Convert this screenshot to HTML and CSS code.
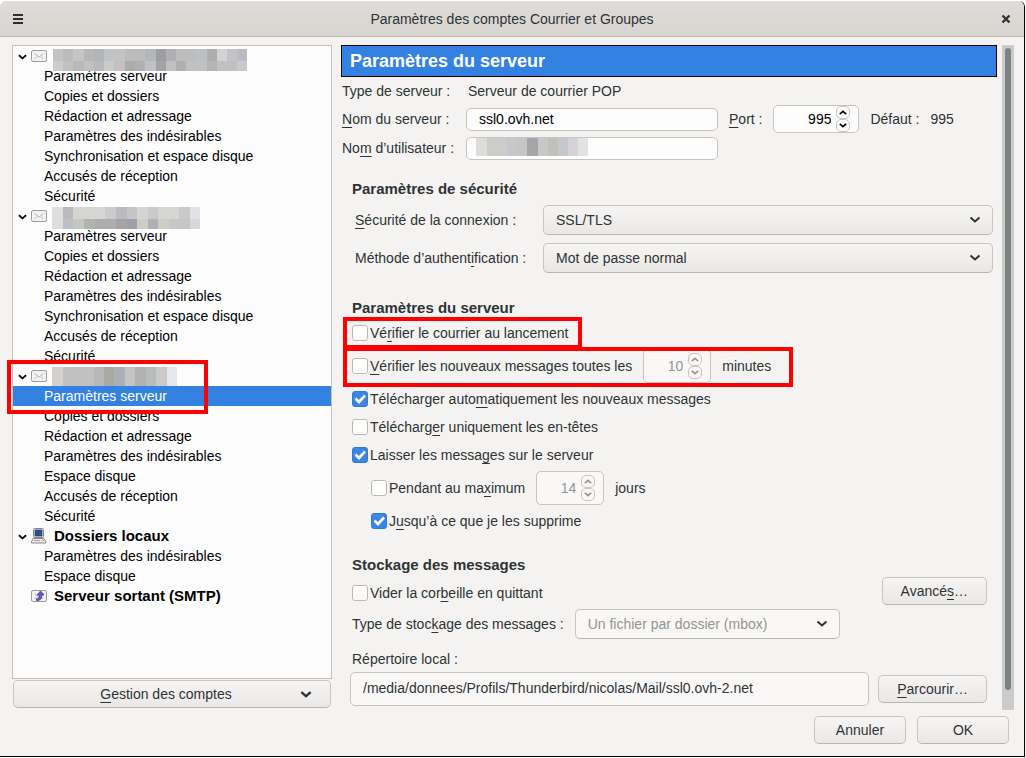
FILE: index.html
```
<!DOCTYPE html>
<html lang="fr">
<head>
    <meta charset="UTF-8">
    <meta name="viewport" content="width=device-width, initial-scale=1.0">
    <title>Paramètres des comptes Courrier et Groupes</title>
    <link rel="stylesheet" href="styles.css">
</head>
<body>
    <!-- Shared icons -->
    <svg class="sprite" aria-hidden="true">
        <symbol id="chevron" viewBox="0 0 10 6">
            <path d="M1 1l4 3.500 4-3.500" fill="none" stroke="currentColor" stroke-width="2"/>
        </symbol>
        <symbol id="mail" viewBox="0 0 16 16">
            <rect x="0.500" y="2.500" width="15" height="11" rx="1.500" fill="#f1f2f1" stroke="#9c9e9a"/>
            <path d="M3.500 5.500l4.500 3.500 4.500-3.500M3.500 11l2.500-2.500M12.500 11l-2.500-2.500" fill="none" stroke="#b0b2ae"/>
        </symbol>
    </svg>

    <div class="window">
        <header class="titlebar">
            <button class="title-button" aria-label="Menu">
                <svg width="10" height="10"><path d="M0 1h10M0 5h10M0 9h10" stroke="#2b2f35" stroke-width="2"/></svg>
            </button>
            <h1>Paramètres des comptes Courrier et Groupes</h1>
            <button class="title-button" aria-label="Fermer">
                <svg width="10" height="10"><path d="M1.500 1.500l7 7M8.500 1.500l-7 7" stroke="#2e3436" stroke-width="2.400"/></svg>
            </button>
        </header>

        <main class="content">
            <nav class="sidebar">
                <ul class="tree">
                    <li>
                        <div class="account">
                            <svg class="twisty"><use href="#chevron"/></svg>
                            <svg class="icon"><use href="#mail"/></svg>
                            <svg class="hidden-name first" width="194" height="22" viewBox="0 0 194 22" shape-rendering="crispEdges">
                                <rect width="194" height="12" fill="#c2c3c4"/>
                                <rect y="12" width="194" height="10" fill="#c1c1c2"/>
                                <rect x="10" width="10" height="12" fill="#bcbcbb"/>
                                <rect x="20" width="11" height="12" fill="#c7c4c5"/>
                                <rect x="31" width="10" height="12" fill="#b7b7b6"/>
                                <rect x="41" width="10" height="12" fill="#b2b4b7"/>
                                <rect x="72" width="20" height="12" fill="#bbbcbc"/>
                                <rect x="92" width="11" height="12" fill="#b4b7b8"/>
                                <rect x="103" width="10" height="12" fill="#9d9ea1"/>
                                <rect x="113" width="10" height="12" fill="#afb0b2"/>
                                <rect x="123" width="20" height="12" fill="#bebdbd"/>
                                <rect x="143" width="11" height="12" fill="#bbc0c4"/>
                                <rect x="154" width="10" height="12" fill="#b0aeac"/>
                                <rect x="164" width="10" height="12" fill="#d3d3d3"/>
                                <rect x="184" width="10" height="12" fill="#b9bcc1"/>
                                <rect y="12" width="10" height="10" fill="#cdcdcf"/>
                                <rect x="20" y="12" width="11" height="10" fill="#b9b9b9"/>
                                <rect x="41" y="12" width="10" height="10" fill="#b7babc"/>
                                <rect x="51" y="12" width="10" height="10" fill="#cbcaca"/>
                                <rect x="72" y="12" width="10" height="10" fill="#acacab"/>
                                <rect x="82" y="12" width="10" height="10" fill="#b1b0b0"/>
                                <rect x="103" y="12" width="10" height="10" fill="#a3a3a4"/>
                                <rect x="123" y="12" width="10" height="10" fill="#b0b0b1"/>
                                <rect x="154" y="12" width="10" height="10" fill="#b7b5b4"/>
                                <rect x="184" y="12" width="10" height="10" fill="#cacaca"/>
                            </svg>
                        </div>
                        <ul>
                            <li><a href="#">Paramètres serveur</a></li>
                            <li><a href="#">Copies et dossiers</a></li>
                            <li><a href="#">Rédaction et adressage</a></li>
                            <li><a href="#">Paramètres des indésirables</a></li>
                            <li><a href="#">Synchronisation et espace disque</a></li>
                            <li><a href="#">Accusés de réception</a></li>
                            <li><a href="#">Sécurité</a></li>
                        </ul>
                    </li>
                    <li>
                        <div class="account">
                            <svg class="twisty"><use href="#chevron"/></svg>
                            <svg class="icon"><use href="#mail"/></svg>
                            <svg class="hidden-name" width="148" height="22" viewBox="0 0 148 22" shape-rendering="crispEdges">
                                <rect width="148" height="12" fill="#d5d5d4"/>
                                <rect y="12" width="148" height="10" fill="#c6c7c5"/>
                                <rect width="11" height="12" fill="#dfdfdf"/>
                                <rect x="11" width="10" height="12" fill="#bbbbbc"/>
                                <rect x="53" width="11" height="12" fill="#cccbcb"/>
                                <rect x="64" width="11" height="12" fill="#b8bcc1"/>
                                <rect x="75" width="10" height="12" fill="#c7c5c3"/>
                                <rect x="96" width="10" height="12" fill="#c9cacc"/>
                                <rect x="127" width="11" height="12" fill="#cac9ca"/>
                                <rect x="138" width="10" height="12" fill="#e1e2e5"/>
                                <rect y="12" width="11" height="10" fill="#e0dcda"/>
                                <rect x="11" y="12" width="10" height="10" fill="#bfbfc8"/>
                                <rect x="32" y="12" width="11" height="10" fill="#b1b3ae"/>
                                <rect x="43" y="12" width="21" height="10" fill="#acadaf"/>
                                <rect x="64" y="12" width="11" height="10" fill="#a5a4a2"/>
                                <rect x="75" y="12" width="10" height="10" fill="#9da0a7"/>
                                <rect x="85" y="12" width="11" height="10" fill="#cccdc7"/>
                                <rect x="96" y="12" width="10" height="10" fill="#b1b1b5"/>
                                <rect x="106" y="12" width="11" height="10" fill="#cfcdca"/>
                                <rect x="138" y="12" width="10" height="10" fill="#d5d8de"/>
                            </svg>
                        </div>
                        <ul>
                            <li><a href="#">Paramètres serveur</a></li>
                            <li><a href="#">Copies et dossiers</a></li>
                            <li><a href="#">Rédaction et adressage</a></li>
                            <li><a href="#">Paramètres des indésirables</a></li>
                            <li><a href="#">Synchronisation et espace disque</a></li>
                            <li><a href="#">Accusés de réception</a></li>
                            <li><a href="#">Sécurité</a></li>
                        </ul>
                    </li>
                    <li class="marked">
                        <div class="account">
                            <svg class="twisty"><use href="#chevron"/></svg>
                            <svg class="icon"><use href="#mail"/></svg>
                            <svg class="hidden-name" width="125" height="19" viewBox="0 0 125 19" shape-rendering="crispEdges">
                                <rect width="125" height="19" fill="#c0c1c0"/>
                                <rect width="11" height="19" fill="#d4d0ce"/>
                                <rect x="42" width="10" height="19" fill="#b7b7b7"/>
                                <rect x="52" width="10" height="19" fill="#a9a8a5"/>
                                <rect x="62" width="11" height="19" fill="#acb0b5"/>
                                <rect x="73" width="10" height="19" fill="#c5c3c4"/>
                                <rect x="83" width="11" height="19" fill="#b1b1b1"/>
                                <rect x="94" width="10" height="19" fill="#b8bcbc"/>
                                <rect x="104" width="11" height="19" fill="#cccac6"/>
                                <rect x="115" width="10" height="19" fill="#e6e7ec"/>
                            </svg>
                        </div>
                        <ul>
                            <li><a href="#" class="selected">Paramètres serveur</a></li>
                            <li><a href="#">Copies et dossiers</a></li>
                            <li><a href="#">Rédaction et adressage</a></li>
                            <li><a href="#">Paramètres des indésirables</a></li>
                            <li><a href="#">Espace disque</a></li>
                            <li><a href="#">Accusés de réception</a></li>
                            <li><a href="#">Sécurité</a></li>
                        </ul>
                    </li>
                    <li>
                        <div class="account">
                            <svg class="twisty"><use href="#chevron"/></svg>
                            <svg class="icon" viewBox="0 0 16 16">
                                <rect x="2.500" y="0.500" width="10" height="9" rx="1" fill="#d9dad6" stroke="#85877f"/>
                                <rect x="4" y="2" width="7" height="6" fill="#2d4d96" stroke="#1b2f66" stroke-width="0.500"/>
                                <path d="M5 10h5v1h-5z" fill="#777"/>
                                <path d="M2 10.500h11l2 3v1.500h-14.500v-1.500z" fill="#e8e8e5" stroke="#898b85"/>
                                <path d="M3 12.500h6M11 12.500h2" stroke="#a7a9a3"/>
                            </svg>
                            <a href="#">Dossiers locaux</a>
                        </div>
                        <ul>
                            <li><a href="#">Paramètres des indésirables</a></li>
                            <li><a href="#">Espace disque</a></li>
                        </ul>
                    </li>
                    <li>
                        <div class="account">
                            <span class="twisty"></span>
                            <svg class="icon" viewBox="0 0 16 16">
                                <use href="#mail"/>
                                <path d="M9.500 3l3.500 4h-2.200c0 4-1.300 5.500-5.300 5.500v-1.800c2 0 2.800-0.900 2.800-3.700h-2.300z" fill="#6a57c8" stroke="#3c2c91" stroke-width="0.700"/>
                            </svg>
                            <a href="#">Serveur sortant (SMTP)</a>
                        </div>
                    </li>
                </ul>
                <button class="button manage">
                    <span><u>G</u>estion des comptes</span>
                    <svg width="12" height="7"><use href="#chevron"/></svg>
                </button>
            </nav>

            <form class="panel">
                <h2 class="banner">Paramètres du serveur</h2>

                <div class="server">
                    <span>Type de serveur&nbsp;:</span>
                    <span class="server-type">Serveur de courrier POP</span>
                    <label for="host"><u>N</u>om du serveur&nbsp;:</label>
                    <div class="server-host">
                        <input type="text" class="text-field" id="host" value="ssl0.ovh.net">
                        <label for="port"><u>P</u>ort&nbsp;:</label>
                        <span class="spin port">
                            <input type="number" id="port" value="995">
                            <span class="steps">
                                <button type="button" aria-label="Augmenter"><svg class="up"><use href="#chevron"/></svg></button>
                                <button type="button" aria-label="Diminuer"><svg><use href="#chevron"/></svg></button>
                            </span>
                        </span>
                        <span>Défaut&nbsp;:</span>
                        <span>995</span>
                    </div>
                    <label for="user">No<u>m</u> d’utilisateur&nbsp;:</label>
                    <div class="user-field">
                        <input type="text" class="text-field" id="user">
                        <svg width="112" height="18" viewBox="0 0 112 18" shape-rendering="crispEdges">
                            <rect width="112" height="18" fill="#cccccb"/>
                            <rect width="11" height="18" fill="#dcdcdb"/>
                            <rect x="31" width="10" height="18" fill="#c5c9cd"/>
                            <rect x="41" width="10" height="18" fill="#c7c5c6"/>
                            <rect x="51" width="11" height="18" fill="#a5a6aa"/>
                            <rect x="62" width="10" height="18" fill="#c6c9c8"/>
                            <rect x="72" width="10" height="18" fill="#c1c0bc"/>
                            <rect x="82" width="10" height="18" fill="#c5c9cd"/>
                            <rect x="92" width="10" height="18" fill="#d5d3d5"/>
                            <rect x="102" width="10" height="18" fill="#e1e2e4"/>
                        </svg>
                    </div>
                </div>

                <section>
                    <h3>Paramètres de sécurité</h3>
                    <div class="security">
                        <label for="ssl"><u>S</u>écurité de la connexion&nbsp;:</label>
                        <select id="ssl"><option>SSL/TLS</option></select>
                        <label for="auth">Méthode d’authent<u>i</u>fication&nbsp;:</label>
                        <select id="auth"><option>Mot de passe normal</option></select>
                    </div>
                </section>

                <section>
                    <h3>Paramètres du serveur</h3>
                    <div class="option">
                        <span class="marked">
                            <label><input type="checkbox">Vé<u>r</u>ifier le courrier au lancement</label>
                        </span>
                    </div>
                    <div class="option tall">
                        <span class="marked wide">
                            <label><input type="checkbox"><u>V</u>érifier les nouveaux messages toutes les</label>
                            <span class="spin disabled">
                                <input type="number" value="10" aria-label="Intervalle en minutes" disabled>
                                <span class="steps">
                                    <button type="button" aria-label="Augmenter" disabled><svg class="up"><use href="#chevron"/></svg></button>
                                    <button type="button" aria-label="Diminuer" disabled><svg><use href="#chevron"/></svg></button>
                                </span>
                            </span>
                            <span>minutes</span>
                        </span>
                    </div>
                    <div class="option">
                        <label><input type="checkbox" checked>Télécharger auto<u>m</u>atiquement les nouveaux messages</label>
                    </div>
                    <div class="option">
                        <label><input type="checkbox">Télécharg<u>e</u>r uniquement les en-têtes</label>
                    </div>
                    <div class="option">
                        <label><input type="checkbox" checked>Laisser les messa<u>g</u>es sur le serveur</label>
                    </div>
                    <div class="option tall nested">
                        <label><input type="checkbox">Pendant au ma<u>x</u>imum</label>
                        <span class="spin disabled">
                            <input type="number" value="14" aria-label="Nombre de jours" disabled>
                            <span class="steps">
                                <button type="button" aria-label="Augmenter" disabled><svg class="up"><use href="#chevron"/></svg></button>
                                <button type="button" aria-label="Diminuer" disabled><svg><use href="#chevron"/></svg></button>
                            </span>
                        </span>
                        <span>jours</span>
                    </div>
                    <div class="option nested">
                        <label><input type="checkbox" checked>J<u>u</u>squ’à ce que je les supprime</label>
                    </div>
                </section>

                <section>
                    <h3>Stockage des messages</h3>
                    <div class="option spread">
                        <label><input type="checkbox">Vider la cor<u>b</u>eille en quittant</label>
                        <button type="button" class="button">Avancé<u>s</u>…</button>
                    </div>
                    <div class="option store">
                        <label for="store">Type de stoc<u>k</u>age des messages&nbsp;:</label>
                        <select id="store" disabled><option>Un fichier par dossier (mbox)</option></select>
                    </div>
                    <label class="path-label" for="path">Répertoire local&nbsp;:</label>
                    <div class="path">
                        <input type="text" class="text-field" id="path" value="/media/donnees/Profils/Thunderbird/nicolas/Mail/ssl0.ovh-2.net" readonly>
                        <button type="button" class="button"><u>P</u>arcourir…</button>
                    </div>
                </section>
            </form>

            <div class="scrollbar"><div class="thumb"></div></div>
        </main>

        <footer class="actions">
            <button class="button">Annuler</button>
            <button class="button">OK</button>
        </footer>
    </div>
</body>
</html>
```
FILE: styles.css
```
*,
*::after {
    box-sizing: border-box;
}

body {
    margin: 0;
    padding: 1px 1px 1px 0;
    background-color: #fff;
    color: #2e3436;
    font: 14px/20px "Liberation Sans", Arial, sans-serif;
}

.window {
    display: flex;
    flex-direction: column;
    min-height: calc(100vh - 2px);
    background-color: #f4f3f1;
    border-right: 1px solid #000;
    border-bottom: 1px solid #000;
    border-radius: 6px 6px 0 0;
}

.sprite {
    display: none;
}

button,
input,
select {
    font: inherit;
    color: inherit;
    margin: 0;
}

ul {
    list-style: none;
    margin: 0;
    padding: 0;
}

a {
    color: inherit;
    text-decoration: none;
}

u {
    text-decoration-thickness: 1px;
    text-underline-offset: 3px;
    text-decoration-skip-ink: none;
}

/* Title bar */
.titlebar {
    display: flex;
    align-items: center;
    height: 36px;
    padding: 0 10px;
    background: linear-gradient(#dfdcd9, #d8d4d0);
    border-bottom: 1px solid #bfb8b1;
    border-radius: 6px 6px 0 0;
}

.titlebar h1 {
    flex: 1;
    margin: 0;
    font-size: 14px;
    font-weight: normal;
    text-align: center;
}

.title-button {
    display: flex;
    align-items: center;
    justify-content: center;
    width: 16px;
    height: 24px;
    padding: 0;
    border: none;
    background: none;
}

.content {
    flex: 1;
    display: flex;
    padding: 8px 10px 0 12px;
}

/* Account tree */
.sidebar {
    display: flex;
    flex-direction: column;
    gap: 1px;
    width: 320px;
    padding-bottom: 2px;
}

.tree {
    flex: 1;
    background-color: #fdfdfd;
    border: 1px solid #c6c2bd;
    color: #000;
}

.tree ul a {
    display: block;
    height: 20px;
    padding-left: 31px;
}

.tree .selected {
    background-color: #3381e0;
    color: #fff;
}

.account {
    display: flex;
    align-items: center;
    height: 20px;
    padding-left: 5px;
    font-size: 15px;
    font-weight: bold;
}

.account a {
    margin-left: 7px;
}

.twisty {
    width: 9px;
    height: 6px;
    margin: 2px 4px 0 0;
}

.icon {
    width: 16px;
    height: 16px;
}

.hidden-name {
    position: relative;
    align-self: flex-start;
    flex-shrink: 0;
    margin: 1px 0 0 5px;
}

.hidden-name.first {
    margin: 3px 0 0 6px;
}

/* Red frames */
.marked {
    position: relative;
}

.marked::after {
    content: "";
    position: absolute;
    inset: -6px -14px -6px -9px;
    border: 4px solid #fe0000;
    pointer-events: none;
}

.marked.wide::after {
    inset: -2px -22px -4px -9px;
}

.tree .marked::after {
    inset: -6px auto auto -6px;
    width: 201px;
    height: 54px;
}

/* Buttons and fields */
.button {
    height: 28px;
    padding: 0 18px;
    background: linear-gradient(#f6f5f4, #eae8e6);
    border: 1px solid #c9c4be;
    border-bottom-color: #bbb5ae;
    border-radius: 5px;
}

.manage {
    display: flex;
    align-items: center;
    margin: 0 1px;
    padding: 0 18px 0 18px;
}

.manage span {
    flex: 1;
}

.text-field {
    height: 23px;
    padding: 0 12px;
    background-color: #fdfdfd;
    border: 1px solid #c9c4be;
    border-radius: 5px;
    color: #000;
}

select {
    appearance: none;
    height: 30px;
    padding: 0 36px 0 12px;
    background: url("data:image/svg+xml,%3Csvg xmlns='http://www.w3.org/2000/svg' width='12' height='8'%3E%3Cpath d='M1.500 1.500L6 5.500l4.500-4' fill='none' stroke='%232e3436' stroke-width='2'/%3E%3C/svg%3E") no-repeat right 11px center, linear-gradient(#f6f5f4, #eae8e6);
    border: 1px solid #c9c4be;
    border-bottom-color: #bbb5ae;
    border-radius: 5px;
}

select:disabled {
    background-image: url("data:image/svg+xml,%3Csvg xmlns='http://www.w3.org/2000/svg' width='12' height='8'%3E%3Cpath d='M1.500 1.500L6 5.500l4.500-4' fill='none' stroke='%232e3436' stroke-width='2'/%3E%3C/svg%3E");
    background-color: #f9f8f7;
    color: #929595;
    opacity: 1;
}

.spin {
    display: flex;
    align-items: center;
    gap: 5px;
    height: 28px;
    padding-right: 8px;
    background-color: #fdfdfd;
    border: 1px solid #c9c4be;
    border-radius: 5px;
    color: #000;
}

.spin input {
    appearance: textfield;
    width: 39px;
    padding: 0;
    border: none;
    background: none;
    text-align: right;
}

.spin input::-webkit-inner-spin-button {
    display: none;
}

.spin.port input {
    width: 57px;
}

.steps {
    display: flex;
    flex-direction: column;
}

.steps button {
    display: flex;
    align-items: center;
    justify-content: center;
    width: 14px;
    height: 13px;
    padding: 0;
    background: none;
    border: 1px solid #c9c4be;
    border-radius: 5px;
}

.steps svg {
    width: 8px;
    height: 5px;
}

.steps .up {
    transform: rotate(180deg);
}

.spin.disabled {
    height: 34px;
    background-color: #f9f8f7;
    color: #929595;
}

input[type="checkbox"] {
    appearance: none;
    width: 16px;
    height: 16px;
    margin-right: 2px;
    background-color: #fff;
    border: 1px solid #bfb8b1;
    border-radius: 3px;
}

input[type="checkbox"]:checked {
    background: url("data:image/svg+xml,%3Csvg xmlns='http://www.w3.org/2000/svg' width='16' height='16'%3E%3Cpath d='M3.500 7.500l3.500 3.500 6-6.500' fill='none' stroke='white' stroke-width='2.600'/%3E%3C/svg%3E") center, #3b86e4;
    border-color: #2f7bd8;
}

/* Settings panel */
.panel {
    flex: 1;
    min-width: 0;
    margin-left: 9px;
}

.banner {
    margin: 0;
    padding: 5px 8px;
    background-color: #3381e0;
    border: 1px solid #000;
    color: #fff;
    font-size: 18px;
    line-height: 20px;
}

.server {
    display: grid;
    grid-template-columns: 124px 1fr;
    grid-template-rows: 28px 28px 30px;
    align-items: center;
    padding-left: 1px;
}

.server-type {
    padding-left: 2px;
}

.server-host {
    display: flex;
    align-items: center;
    gap: 11px;
}

.server .text-field {
    width: 252px;
}

.user-field {
    position: relative;
    display: flex;
}

.user-field svg {
    position: absolute;
    left: 10px;
    top: 1px;
}

section {
    margin-top: 15px;
    padding: 0 4px 0 11px;
}

section + section {
    margin-top: 19px;
}

h3 {
    height: 22px;
    margin: 0;
    font-size: 15px;
    line-height: 22px;
}

.security {
    display: grid;
    grid-template-columns: 188px 1fr;
    gap: 8px 0;
    align-items: center;
    padding: 5px 0 5px 3px;
}

.option {
    display: flex;
    align-items: center;
    gap: 11px;
    height: 28px;
}

.option label,
.option .marked {
    display: flex;
    align-items: center;
}

.option label {
    white-space: pre;
}

.option .marked.wide {
    gap: 11px;
}

.option.tall {
    height: 38px;
}

.nested {
    padding-left: 19px;
}

.spread {
    justify-content: space-between;
    margin: 1px 6px 4px 0;
}

.spread label {
    padding-top: 4px;
}

.store {
    height: 30px;
}

.store select {
    width: 265px;
}

.path-label {
    display: block;
    margin-top: 10px;
}

.path {
    display: flex;
    align-items: center;
    gap: 9px;
    margin: 3px 6px 0 -2px;
}

.path .text-field {
    flex: 1;
    min-width: 0;
    height: 34px;
    padding-bottom: 2px;
    background-color: #f9f8f7;
    color: #2e3436;
}

/* Scrollbar */
.scrollbar {
    width: 12px;
    margin-left: 5px;
    padding: 3px;
    padding-bottom: 20px;
    background-color: #cbcbcb;
}

.thumb {
    height: 100%;
    border-radius: 3px;
    background-color: #7e8280;
}

.actions {
    display: flex;
    justify-content: flex-end;
    gap: 11px;
    padding: 6px 15px 12px;
}

.actions .button {
    width: 92px;
}
```
